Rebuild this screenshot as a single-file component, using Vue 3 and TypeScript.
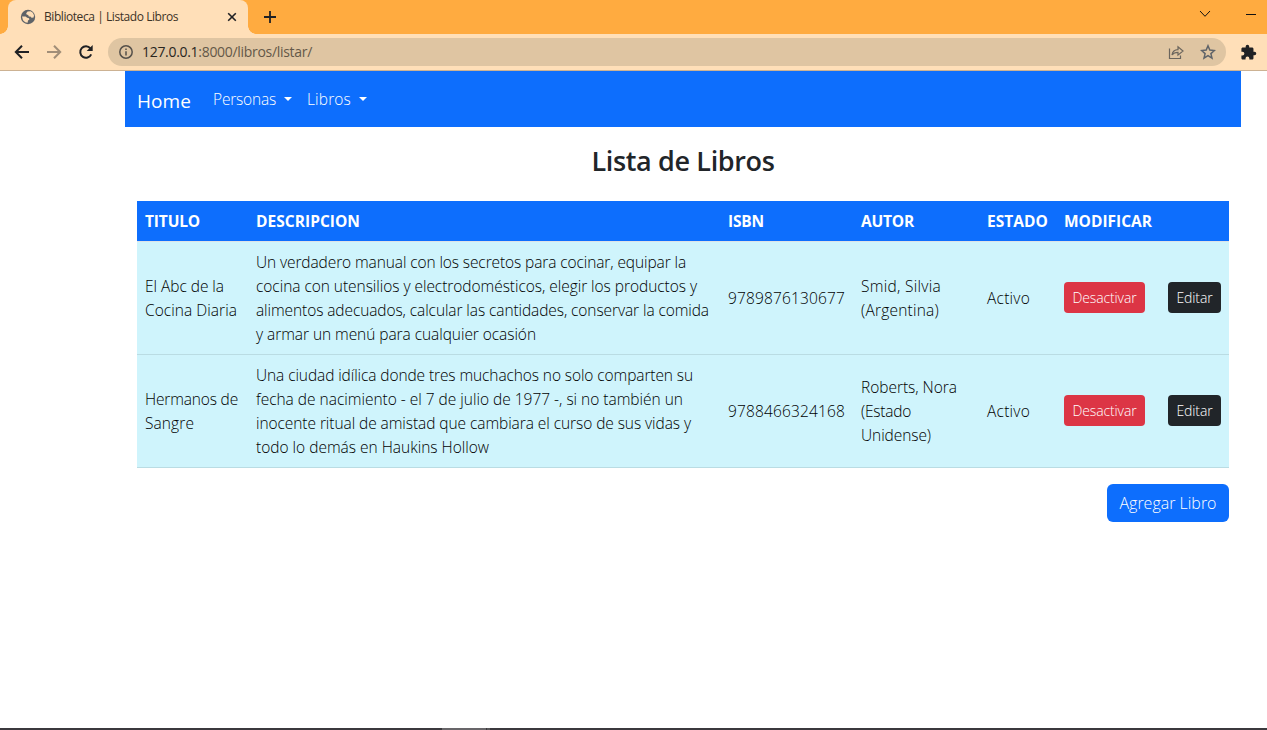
<script setup lang="ts">
interface Line {
  text: string
  width: number
}

interface Book {
  title: Line[]
  description: Line[]
  isbn: Line
  author: Line[]
}

const headers: Line[] = [
  { text: 'TITULO', width: 55 },
  { text: 'DESCRIPCION', width: 104 },
  { text: 'ISBN', width: 36 },
  { text: 'AUTOR', width: 53 },
  { text: 'ESTADO', width: 61 },
  { text: 'MODIFICAR', width: 88 },
]

const books: Book[] = [
  {
    title: [
      { text: 'El Abc de la', width: 79 },
      { text: 'Cocina Diaria', width: 92 },
    ],
    description: [
      { text: 'Un verdadero manual con los secretos para cocinar, equipar la', width: 430 },
      { text: 'cocina con utensilios y electrodomésticos, elegir los productos y', width: 441 },
      { text: 'alimentos adecuados, calcular las cantidades, conservar la comida', width: 453 },
      { text: 'y armar un menú para cualquier ocasión', width: 280 },
    ],
    isbn: { text: '9789876130677', width: 117 },
    author: [
      { text: 'Smid, Silvia', width: 80 },
      { text: '(Argentina)', width: 78 },
    ],
  },
  {
    title: [
      { text: 'Hermanos de', width: 93 },
      { text: 'Sangre', width: 49 },
    ],
    description: [
      { text: 'Una ciudad idílica donde tres muchachos no solo comparten su', width: 437 },
      { text: 'fecha de nacimiento - el 7 de julio de 1977 -, si no también un', width: 427 },
      { text: 'inocente ritual de amistad que cambiara el curso de sus vidas y', width: 435 },
      { text: 'todo lo demás en Haukins Hollow', width: 233 },
    ],
    isbn: { text: '9788466324168', width: 117 },
    author: [
      { text: 'Roberts, Nora', width: 96 },
      { text: '(Estado', width: 50 },
      { text: 'Unidense)', width: 70 },
    ],
  },
]

// Adjusts tracking so that a text run takes the given advance width.
const vFit = {
  mounted(el: HTMLElement, binding: { value: number }) {
    const count = (el.textContent ?? '').length
    const natural = el.getBoundingClientRect().width
    el.style.letterSpacing = `${(binding.value - natural) / count}px`
  },
}
</script>

<template>
  <div class="window">
    <header class="tabstrip">
      <div class="tab">
        <svg class="globe" viewBox="0 0 16 16">
          <circle cx="8" cy="8" r="7.2" fill="#5f6368" />
          <path d="M7.6 2.6 L10.6 2.2 L12.8 3.8 L14 6.2 L13.6 8.4 L11.6 8.8 L10.4 7.6 L8.8 7.4 L8.2 6 L6.6 5.6 L6.2 4.2z M2 7.4 L5.6 7.4 L7.2 8.8 L9 9.2 L9.4 10.6 L8 11.4 L7.6 13.8 L5.2 13.2 L3 11.2z" fill="#ffdfb8" />
        </svg>
        <span class="tab-title"><span v-fit="134" class="run">Biblioteca | Listado Libros</span></span>
        <svg class="close" viewBox="0 0 10 10"><path d="M1.2 1.2 8.8 8.8M8.8 1.2 1.2 8.8" /></svg>
      </div>
      <svg class="plus" viewBox="0 0 12 12"><path d="M6 0V12M0 6H12" /></svg>
      <div class="controls">
        <svg class="chevron" viewBox="0 0 12 8"><path d="M1 1 6 6.3 11 1" /></svg>
        <svg class="minimize" viewBox="0 0 10 2"><path d="M0 1.5H10" /></svg>
      </div>
    </header>

    <div class="toolbar">
      <svg class="nav-icon" viewBox="0 0 16 16"><path d="M15 8H2M8 1.7 1.8 8 8 14.3" /></svg>
      <svg class="nav-icon faded" viewBox="0 0 16 16"><path d="M1 8H14M8 1.7 14.2 8 8 14.3" /></svg>
      <svg class="nav-icon" viewBox="0 0 16 16"><path d="M13.2 10.3A5.7 5.7 0 1 1 12.4 4.4" /><path class="solid" d="M14.7 1V7H8.7z" /></svg>
      <div class="address">
        <svg class="info" viewBox="0 0 16 16"><circle cx="8" cy="8" r="6.2" /><path d="M8 7.2V11.5M8 4.4V6" /></svg>
        <span class="url"><span v-fit="170" class="run"><span class="host">127.0.0.1</span>:8000/libros/listar/</span></span>
        <svg class="share" viewBox="0 0 16 16"><path d="M1.5 4.5V14.5H12.5V11.5M4 11C4.6 7.4 6.6 5.8 10 5.7V2.8L15 7 10 11.1V8.3C7.3 8.3 5.3 9.2 4 11z" /></svg>
        <svg class="star" viewBox="0 0 16 16"><path d="M8 1.8 9.8 6.1 14.4 6.5 10.9 9.6 12 14.1 8 11.7 4 14.1 5.1 9.6 1.6 6.5 6.2 6.1z" /></svg>
      </div>
      <svg class="puzzle" viewBox="0 0 24 24"><path d="M20.5 11H19V7c0-1.1-.9-2-2-2h-4V3.5a2.5 2.5 0 0 0-5 0V5H4c-1.1 0-2 .9-2 2v3.8h1.5a2.7 2.7 0 0 1 0 5.4H2V20c0 1.1.9 2 2 2h3.8v-1.5a2.7 2.7 0 0 1 5.4 0V22H17c1.1 0 2-.9 2-2v-4h1.5a2.5 2.5 0 0 0 0-5z" /></svg>
    </div>

    <main class="page">
      <nav class="navbar">
        <span class="brand"><span v-fit="54" class="run">Home</span></span>
        <span class="menu personas"><span v-fit="63" class="run">Personas</span><i class="caret"></i></span>
        <span class="menu"><span v-fit="44" class="run">Libros</span><i class="caret"></i></span>
      </nav>

      <section class="content">
        <h1><span v-fit="183" class="run">Lista de Libros</span></h1>
        <table>
          <colgroup>
            <col class="c-title" /><col class="c-desc" /><col class="c-isbn" /><col class="c-author" /><col class="c-state" /><col class="c-modify" /><col class="c-edit" />
          </colgroup>
          <thead>
            <tr>
              <th v-for="h in headers" :key="h.text"><span v-fit="h.width" class="run">{{ h.text }}</span></th>
              <th></th>
            </tr>
          </thead>
          <tbody>
            <tr v-for="book in books" :key="book.isbn.text">
              <td><div v-for="l in book.title" :key="l.text" class="line"><span v-fit="l.width" class="run">{{ l.text }}</span></div></td>
              <td><div v-for="l in book.description" :key="l.text" class="line"><span v-fit="l.width" class="run">{{ l.text }}</span></div></td>
              <td><div class="line"><span v-fit="book.isbn.width" class="run">{{ book.isbn.text }}</span></div></td>
              <td><div v-for="l in book.author" :key="l.text" class="line"><span v-fit="l.width" class="run">{{ l.text }}</span></div></td>
              <td><div class="line"><span v-fit="43" class="run">Activo</span></div></td>
              <td class="cell-action"><button class="btn danger"><span v-fit="64" class="run">Desactivar</span></button></td>
              <td class="cell-action"><button class="btn dark"><span v-fit="36" class="run">Editar</span></button></td>
            </tr>
          </tbody>
        </table>
        <div class="actions">
          <button class="add"><span v-fit="97" class="run">Agregar Libro</span></button>
        </div>
      </section>
    </main>
    <footer class="taskbar"><span class="task-active"></span><span class="task-edge"></span></footer>
  </div>
</template>

<style>
body {
  margin: 0;
  overflow: hidden;
}
</style>

<style scoped>
* {
  box-sizing: border-box;
}
.window {
  width: 1267px;
  height: 730px;
  display: flex;
  flex-direction: column;
  background: #fff;
  font-family: "Open Sans", "Noto Sans", sans-serif;
  font-weight: 300;
  color: #000;
  overflow: hidden;
}
svg {
  display: block;
  flex: none;
  fill: none;
}
.run {
  display: inline-block;
  white-space: nowrap;
}
.tabstrip {
  height: 34px;
  flex: none;
  display: flex;
  align-items: center;
  padding-left: 8px;
  background: radial-gradient(circle at 0 0, #ffab40 7.5px, #ffdfb8 8px) 0 100% / 8px 8px no-repeat,
    radial-gradient(circle at 100% 0, #ffab40 7.5px, #ffdfb8 8px) 248px 100% / 8px 8px no-repeat, #ffab40;
}
.tab {
  width: 240px;
  height: 34px;
  display: flex;
  align-items: center;
  padding: 0 11px 0 12px;
  border-radius: 8px 8px 0 0;
  background: #ffdfb8;
}
.globe {
  width: 16px;
  height: 16px;
  margin-right: 8px;
}
.tab-title {
  flex: 1;
  font-size: 12px;
  line-height: 18px;
  font-weight: 400;
  color: #3c3226;
}
.close {
  width: 10px;
  height: 10px;
  stroke: #202124;
  stroke-width: 1.6;
}
.plus {
  width: 12px;
  height: 12px;
  margin-left: 16px;
  stroke: #202124;
  stroke-width: 1.8;
}
.controls {
  display: flex;
  align-items: center;
  gap: 35px;
  margin-left: auto;
  padding: 0 11px 6px 0;
  stroke: #111;
}
.chevron {
  width: 12px;
  height: 8px;
}
.minimize {
  width: 10px;
  height: 2px;
}
.toolbar {
  height: 37px;
  flex: none;
  display: flex;
  align-items: center;
  gap: 16px;
  padding: 0 10px 0 14px;
  border-bottom: 1px solid #ccb293;
  background: #ffdfb8;
}
.nav-icon {
  width: 16px;
  height: 16px;
  stroke: #202124;
  stroke-width: 2;
}
.faded {
  stroke: #a18e78;
}
.solid {
  fill: #202124;
  stroke: none;
}
.address {
  flex: 1;
  height: 28px;
  margin-left: -2px;
  margin-right: -2px;
  display: flex;
  align-items: center;
  padding: 0 10px;
  border-radius: 14px;
  background: #dfc5a2;
}
.info {
  width: 16px;
  height: 16px;
  margin-right: 8px;
  stroke: #55504a;
  stroke-width: 1.5;
}
.url {
  flex: 1;
  font-size: 14px;
  line-height: 20px;
  font-weight: 400;
  color: #645848;
}
.host {
  color: #29251f;
}
.share {
  width: 16px;
  height: 16px;
  margin-right: 16px;
  stroke: #6b655d;
  stroke-width: 1.2;
}
.star {
  width: 16px;
  height: 16px;
  stroke: #5f6368;
  stroke-width: 1.5;
}
.puzzle {
  width: 17px;
  height: 17px;
  fill: #202124;
}
.page {
  width: 1116px;
  flex: 1;
  margin-left: 125px;
}
.navbar {
  height: 56px;
  display: flex;
  align-items: center;
  padding: 0 13px 0 12px;
  background: #0d6efd;
  color: #fff;
}
.brand {
  width: 76px;
  font-size: 19px;
  line-height: 30px;
  font-weight: 400;
  padding-top: 3px;
}
.menu {
  display: flex;
  align-items: center;
  font-size: 15.5px;
  line-height: 24px;
}
.personas {
  width: 94px;
}
.caret {
  margin-left: 8px;
  border: 4.5px solid transparent;
  border-top-color: #fff;
  border-bottom: 0;
}
.content {
  padding: 16px 12px 0;
}
h1 {
  margin: 0 0 24px;
  height: 34px;
  line-height: 36px;
  font-size: 27px;
  font-weight: 600;
  text-align: center;
  color: #212529;
}
table {
  width: 1092px;
  table-layout: fixed;
  border-spacing: 0;
  font-size: 15.5px;
  line-height: 24px;
}
.c-title { width: 111px; }
.c-desc { width: 472px; }
.c-isbn { width: 133px; }
.c-author { width: 126px; }
.c-state { width: 77px; }
.c-modify { width: 104px; }
.c-edit { width: 69px; }
th,
td {
  padding: 8px;
  text-align: left;
  vertical-align: middle;
}
th {
  height: 41px;
  border-bottom: 1px solid #dee2e6;
  background: #0d6efd;
  color: #fff;
  font-size: 15.5px;
  font-weight: 700;
}
td {
  height: 113px;
  border-bottom: 1px solid #badce3;
  background: #cff4fc;
}
.cell-action {
  padding-bottom: 10px;
}
.line {
  height: 24px;
}
button {
  display: block;
  border: 0;
  padding: 0;
  font: inherit;
  color: #fff;
  text-align: center;
}
.btn {
  height: 31px;
  font-size: 14px;
  line-height: 31px;
  border-radius: 4px;
}
.danger {
  width: 81px;
  background: #dc3545;
}
.dark {
  width: 53px;
  background: #212529;
}
.actions {
  display: flex;
  justify-content: flex-end;
  padding-top: 16px;
}
.add {
  width: 122px;
  height: 38px;
  border-radius: 6px;
  background: #0d6efd;
  line-height: 38px;
}
.taskbar {
  height: 2px;
  flex: none;
  display: flex;
  gap: 1px;
  padding-left: 442px;
  background: #3b393d;
}
.task-active {
  width: 44px;
  background: #686669;
}
.task-edge {
  width: 3px;
  background: #59575a;
}
</style>
